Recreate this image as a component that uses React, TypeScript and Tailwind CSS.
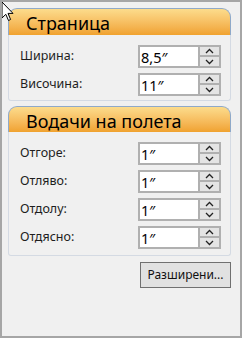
import React from "react";

function Chevron({ up }: { up?: boolean }) {
  return (
    <svg width="9" height="6" viewBox="0 0 9 6" className="block">
      <polyline
        points={up ? "1,5 4.5,1.5 8,5" : "1,1 4.5,4.5 8,1"}
        fill="none"
        stroke="#222"
        strokeWidth="1.3"
      />
    </svg>
  );
}

function Row({ label, value }: { label: string; value: string }) {
  return (
    <div className="flex items-center h-[23px]">
      <div className="w-[118px] text-[12.5px] text-[#1e1e1e] leading-none">{label}</div>
      <div className="w-[62px] h-[23px] border-2 border-[#b0b0b0] bg-white flex items-center pl-[1px] pt-[1px] text-[14.5px] leading-none text-black">
        {value}
      </div>
      <div className="w-[21px] h-[23px] flex flex-col">
        <div className="h-[12px] border-2 border-l-0 border-[#b0b0b0] bg-[#e4e4e4] flex items-center justify-center">
          <Chevron up />
        </div>
        <div className="h-[11px] border-2 border-l-0 border-t-0 border-[#b0b0b0] bg-[#e4e4e4] flex items-center justify-center">
          <Chevron />
        </div>
      </div>
    </div>
  );
}

function Section({
  title,
  rows,
  headerH,
  pb,
}: {
  title: string;
  rows: [string, string][];
  headerH: string;
  pb: string;
}) {
  return (
    <div>
      <div
        className={`${headerH} rounded-t-[9px] border border-b-0 border-[#8fa9c9] bg-linear-to-b from-[#fcdc8c] to-[#f0a22e] flex items-center pl-[17px] pt-[2px] text-[18px] leading-none text-black`}
      >
        {title}
      </div>
      <div className={`border border-t-0 border-[#d4dae3] rounded-b-[3px] pl-[11px] pt-[10px] ${pb} flex flex-col gap-[5px]`}>
        {rows.map(([l, v]) => (
          <Row key={l} label={l} value={v} />
        ))}
      </div>
    </div>
  );
}

export default function App() {
  return (
    <div className="relative w-[242px] h-[338px] border-2 border-[#a6a6a6] bg-[#f0f0f0] pl-[6px] pt-[6px] pr-[9px] font-['Noto_Sans',sans-serif] overflow-hidden">
      <Section
        title="Страница"
        headerH="h-[27px]"
        pb="pb-[4px]"
        rows={[
          ["Ширина:", "8,5″"],
          ["Височина:", "11″"],
        ]}
      />
      <div className="mt-[5px]">
        <Section
          title="Водачи на полета"
          headerH="h-[26px]"
          pb="pb-[6px]"
          rows={[
            ["Отгоре:", "1″"],
            ["Отляво:", "1″"],
            ["Отдолу:", "1″"],
            ["Отдясно:", "1″"],
          ]}
        />
      </div>
      <div className="flex justify-end mt-[6px]">
        <button className="w-[91px] h-[26px] border border-[#707070] bg-[#e1e1e1] text-[12px] leading-none text-[#111] flex items-center justify-center">
          Разширени...
        </button>
      </div>
      <svg
        className="absolute left-[-1px] top-[-1px]"
        width="14"
        height="22"
        viewBox="0 0 14 22"
      >
        <path
          d="M1 1 L1 17 L4.8 13.3 L7.5 19.5 L9.6 18.5 L7 12.4 L12 12.4 Z"
          fill="white"
          stroke="black"
          strokeWidth="1"
          strokeLinejoin="miter"
        />
      </svg>
    </div>
  );
}
